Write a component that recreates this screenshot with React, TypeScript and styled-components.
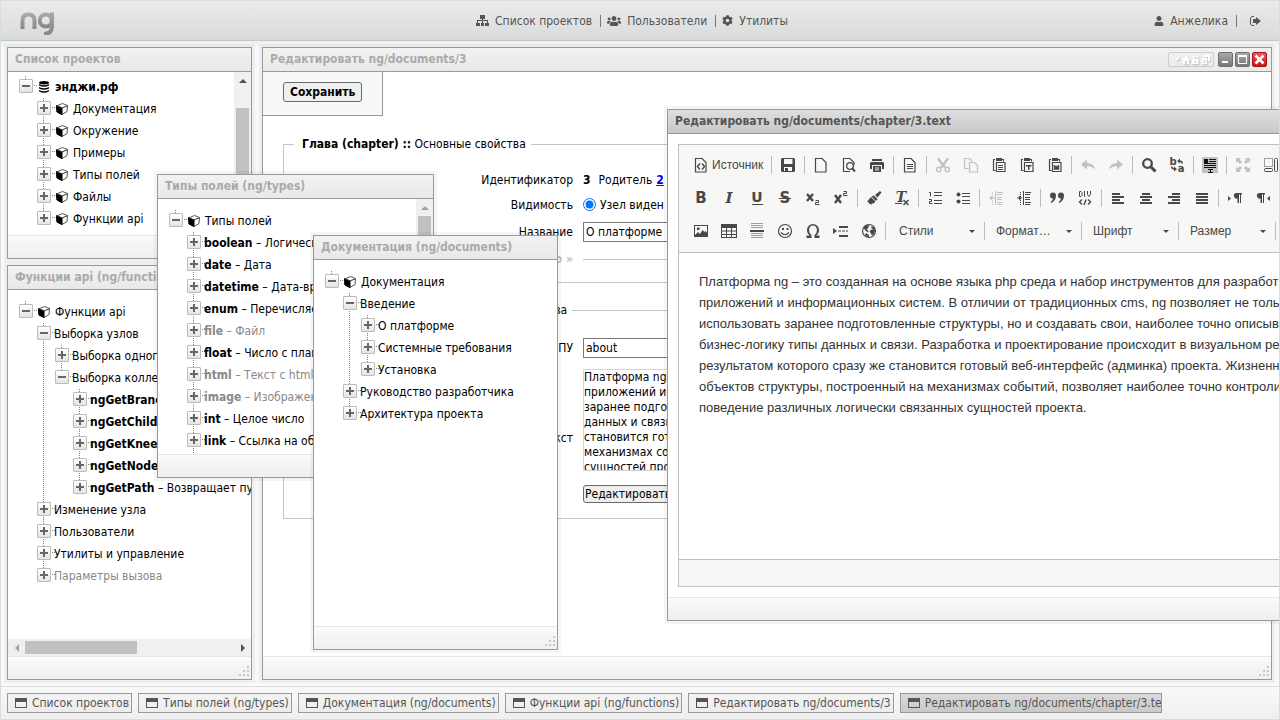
import React from "react";
import styled, { createGlobalStyle, css } from "styled-components";
import { FaCog, FaUser, FaUsers } from "react-icons/fa";

const uiFont = `"DejaVu Sans Condensed", "Noto Sans", sans-serif`;
const editorFont = `"Liberation Sans", Arial, sans-serif`;

const GlobalStyle = createGlobalStyle`
  *, *::before, *::after { box-sizing: border-box; }
  body { margin: 0; background: #f8f9f9; font: 12px/22px ${uiFont}; color: #000; }
  button, input, select { font: inherit; color: inherit; }
  ul { list-style: none; margin: 0; padding: 0; }
`;

/* ---------- Page frame ---------- */

const Screen = styled.div`
  height: 100vh;
  display: flex;
  flex-direction: column;
  overflow: hidden;
  border: 1px solid #d9dbe3;
`;

const Header = styled.header`
  height: 40px;
  flex: none;
  display: grid;
  grid-template-columns: 1fr auto 1fr;
  align-items: center;
  padding: 0 18px;
  background: linear-gradient(#ebebeb, #d9dadb);
  border-bottom: 1px solid #c4c5c6;
  color: #555;
`;

const Nav = styled.nav<{ $end?: boolean }>`
  display: flex;
  align-items: center;
  justify-self: ${(p) => (p.$end ? "end" : "auto")};
  padding-right: ${(p) => (p.$end ? 0 : 16)}px;
`;

const NavLink = styled.a`
  display: flex;
  align-items: center;
  gap: 6px;
  color: inherit;
  text-decoration: none;
  svg { flex: none; }
`;

const Divider = styled.span<{ $before: number; $after: number }>`
  width: 1px;
  height: 12px;
  margin: 0 ${(p) => p.$after}px 0 ${(p) => p.$before}px;
  background: #777;
`;

const Desktop = styled.main`
  position: relative;
  flex: 1;
  min-height: 0;
  overflow: hidden;
  background: linear-gradient(#eeefef, #f8f9f9 8px);
`;

const Taskbar = styled.footer`
  height: 33px;
  flex: none;
  display: flex;
  gap: 6px;
  padding: 6px;
  background: linear-gradient(#f9f9f9, #efefef);
  border-top: 1px solid #d9dcdf;
`;

const Task = styled.button<{ $active?: boolean }>`
  height: 20px;
  max-width: 262px;
  display: flex;
  align-items: center;
  gap: 5px;
  padding: 0 2px 0 7px;
  overflow: hidden;
  white-space: nowrap;
  border: 1px solid #999;
  background: ${(p) => (p.$active ? "linear-gradient(#dadada, #c9c9c9)" : "linear-gradient(#f4f4f4, #ececec)")};
  color: #555;
  line-height: 18px;
  svg { flex: none; }
`;

/* ---------- Windows ---------- */

type Place = { left?: number; right?: number; top?: number; bottom?: number; width?: number; height?: number };
const px = (name: string, v?: number) => (v === undefined ? "" : `${name}: ${v}px;`);

const WindowBox = styled.section<{ $place: Place }>`
  position: absolute;
  ${({ $place: p }) => css`
    ${px("left", p.left)} ${px("right", p.right)} ${px("top", p.top)}
    ${px("bottom", p.bottom)} ${px("width", p.width)} ${px("height", p.height)}
  `}
  display: flex;
  flex-direction: column;
  border: 1px solid #999;
  background: #fff;
  box-shadow: 0 0 0 3px rgba(0, 0, 0, 0.04);
`;

const TitleBar = styled.header<{ $active?: boolean }>`
  height: 24px;
  flex: none;
  display: flex;
  align-items: center;
  justify-content: space-between;
  padding: 0 4px 0 7px;
  border-bottom: 1px solid #999;
  background: ${(p) => (p.$active ? "linear-gradient(#dedede, #c8c8c8)" : "linear-gradient(#f2f2f2, #e9e9e9)")};
  color: ${(p) => (p.$active ? "#555" : "#aaa")};
`;

const Title = styled.h2`
  margin: 0;
  padding-bottom: 2px;
  font-size: 12px;
  line-height: 20px;
  font-weight: bold;
  white-space: nowrap;
`;

const WindowBody = styled.div`
  flex: 1;
  min-height: 0;
  display: flex;
  overflow: hidden;
`;

const WindowFooter = styled.footer`
  height: 23px;
  flex: none;
  display: flex;
  align-items: flex-end;
  justify-content: flex-end;
  padding: 2px 1px;
  border-top: 1px solid #e6e6e6;
  background: linear-gradient(#fafafa, #efefef);
`;

const Controls = styled.div`
  display: flex;
  gap: 2px;
`;

const ControlGroup = styled.div`
  display: flex;
  align-items: center;
  justify-content: space-evenly;
  width: 46px;
  height: 15px;
  margin-right: 2px;
  border: 1px solid #ccc;
  border-radius: 2px;
`;

const ControlButton = styled.button<{ $danger?: boolean }>`
  width: 15px;
  height: 15px;
  padding: 0;
  display: grid;
  place-items: center;
  border: 1px solid ${(p) => (p.$danger ? "#b01515" : "#6f6f6f")};
  border-radius: 2px;
  background: ${(p) => (p.$danger ? "linear-gradient(#ee5555, #cc1414)" : "linear-gradient(#a9a9a9, #777)")};
`;

const Grip = () => (
  <svg width="12" height="12" fill="#c8c8c8" aria-hidden="true">
    <path d="M9 1h2v2h-2zM5 5h2v2h-2zM9 5h2v2h-2zM1 9h2v2h-2zM5 9h2v2h-2zM9 9h2v2h-2z" />
  </svg>
);

const groupShapes = (
  <>
    <path d="M3 5h6L6 8z" />
    <path fillRule="evenodd" d="M11 7l4-4.500L19 7h-1v4h-6V7zM14 8v3h2V8z" />
    <path fillRule="evenodd" d="M21 6h6.500v5H21zM23.500 8v1.500h1.500V8zM22 6V3.500q2.500-2.500 5 0V5h-1.500V4q-1-1-2 0v2z" />
    <path fillRule="evenodd" d="M33 2h6v6h-2V4h-4zM31 5h5v6h-5zM32.500 7.500V10h2V7.500z" />
  </>
);

const WindowControls = () => (
  <Controls>
    <ControlGroup>
      <svg width="40" height="13" viewBox="0 0 40 13" aria-hidden="true">
        <g fill="#c6c6c6" stroke="#d4d4d4" transform="translate(1 1)">{groupShapes}</g>
        <g fill="#fff">{groupShapes}</g>
      </svg>
    </ControlGroup>
    <ControlButton aria-label="Свернуть">
      <svg width="13" height="13"><path d="M3 8h6v2H3z" fill="#fff" /></svg>
    </ControlButton>
    <ControlButton aria-label="Развернуть">
      <svg width="13" height="13"><path d="M2 2h9v9H2zM3 4v6h7V4z" fill="#fff" fillRule="evenodd" /></svg>
    </ControlButton>
    <ControlButton $danger aria-label="Закрыть">
      <svg width="13" height="13"><path d="M2.500 2.500l8 8M10.500 2.500l-8 8" stroke="#fff" strokeWidth="2.600" /></svg>
    </ControlButton>
  </Controls>
);

type WindowProps = {
  title: string;
  place: Place;
  active?: boolean;
  controls?: boolean;
  children: React.ReactNode;
};

const Window = ({ title, place, active, controls, children }: WindowProps) => (
  <WindowBox $place={place}>
    <TitleBar $active={active}>
      <Title>{title}</Title>
      {controls && <WindowControls />}
    </TitleBar>
    <WindowBody>{children}</WindowBody>
    <WindowFooter>
      <Grip />
    </WindowFooter>
  </WindowBox>
);

/* ---------- Scroll bars ---------- */

const ScrollTrack = styled.div<{ $horizontal?: boolean }>`
  flex: none;
  display: flex;
  flex-direction: ${(p) => (p.$horizontal ? "row" : "column")};
  ${(p) => (p.$horizontal ? "height: 17px;" : "width: 17px;")}
  background: #f0f0f0;
`;

const ScrollArrow = styled.span`
  width: 17px;
  height: 17px;
  flex: none;
  display: grid;
  place-items: center;
`;

const ScrollThumb = styled.span<{ $offset?: number; $size: number; $horizontal?: boolean }>`
  flex: none;
  background: #c1c1c1;
  ${(p) =>
    p.$horizontal
      ? `height: 13px; width: ${p.$size}px; margin: 2px auto 0 ${p.$offset ?? 0}px;`
      : `width: 13px; height: ${p.$size}px; margin: ${p.$offset ?? 0}px 2px auto;`}
`;

const arrowPaths = { up: "M4 10l4-4 4 4z", left: "M10 4v8l-4-4z", right: "M6 4v8l4-4z" };
const Arrow = ({ to, dim }: { to: keyof typeof arrowPaths; dim?: boolean }) => (
  <ScrollArrow>
    <svg width="16" height="16" aria-hidden="true">
      <path d={arrowPaths[to]} fill={dim ? "#a3a3a3" : "#505050"} />
    </svg>
  </ScrollArrow>
);

/* ---------- Trees ---------- */

type TreeItem = {
  name?: string;
  label?: string;
  icon?: "cube" | "base";
  muted?: boolean;
  more?: boolean;
  children?: TreeItem[];
};

const TreePane = styled.div<{ $top?: number }>`
  flex: 1;
  min-width: 0;
  overflow: hidden;
  padding: ${(p) => p.$top ?? 10}px 0 0 11px;
`;

const dots = (dir: string) => `repeating-linear-gradient(${dir}, transparent 0 1px, #808080 1px 2px)`;

const Node = styled.li<{ $more?: boolean }>`
  background: ${dots("to bottom")} 6px 0 / 1px 100% no-repeat;
  &:last-child {
    background-size: 1px ${(p) => (p.$more ? "100%" : "11px")};
    padding-bottom: ${(p) => (p.$more ? 3 : 0)}px;
  }
  > ul { margin-left: 18px; }
`;

const NodeRow = styled.div<{ $muted?: boolean }>`
  height: 22px;
  display: flex;
  align-items: center;
  white-space: nowrap;
  color: ${(p) => (p.$muted ? "#888" : "#000")};
  background: ${dots("to right")} 14px 10px / 4px 1px no-repeat;
`;

const Toggle = styled.button`
  width: 14px;
  height: 14px;
  flex: none;
  display: grid;
  place-items: center;
  padding: 0;
  margin-right: 3px;
  border: 1px solid #bbb;
  border-radius: 1px;
  background: linear-gradient(#fff, #e4e4e4);
`;

const NodeIcon = styled.span`
  display: flex;
  margin: 2px 5px 0 2px;
`;

const NodeLabel = styled.span`
  padding-top: 2px;
`;

const Cube = () => (
  <svg width="12" height="12" viewBox="0 0 12 12" aria-hidden="true">
    <path d="M6.500 .5L11.500 2.500L11 8.500L6 11.500L1 9L.5 3z" fill="#fff" stroke="#555" />
    <path d="M.5 2.700L6 5v6.500L1 9z" fill="#000" stroke="#000" />
    <path d="M.5 2.700L6 5l5.500-2.300" fill="none" stroke="#333" />
  </svg>
);

const Base = () => (
  <svg width="12" height="12" viewBox="0 0 12 12" aria-hidden="true">
    <ellipse cx="6" cy="1.700" rx="5" ry="1.700" />
    <path d="M1 3q5 2.500 10 0v1.400q-5 2.800-10 0zM1 6q5 2.500 10 0v1.400q-5 2.800-10 0zM1 9q5 2.500 10 0v1.200q-5 3-10 0z" />
  </svg>
);

const Tree = ({ items }: { items: TreeItem[] }) => (
  <ul>
    {items.map((item, i) => (
      <Node key={i} $more={item.more}>
        <NodeRow $muted={item.muted}>
          <Toggle aria-label={item.children ? "Свернуть ветку" : "Раскрыть ветку"}>
            <svg width="12" height="12">
              <path d={item.children ? "M2 5h8v2H2z" : "M2 5h8v2H2zM5 2h2v8H5z"} fill="#666" />
            </svg>
          </Toggle>
          {item.icon && <NodeIcon>{item.icon === "cube" ? <Cube /> : <Base />}</NodeIcon>}
          <NodeLabel>
            {item.name && <b>{item.name}</b>}
            {item.name && item.label && " – "}
            {item.label}
          </NodeLabel>
        </NodeRow>
        {item.children && <Tree items={item.children} />}
      </Node>
    ))}
  </ul>
);

const cubes = (...labels: string[]): TreeItem[] => labels.map((label) => ({ label, icon: "cube" }));

const projectTree: TreeItem[] = [
  {
    name: "энджи.рф",
    icon: "base",
    children: cubes("Документация", "Окружение", "Примеры", "Типы полей", "Файлы", "Функции api"),
  },
];

const functionTree: TreeItem[] = [
  {
    label: "Функции api",
    icon: "cube",
    children: [
      {
        label: "Выборка узлов",
        children: [
          { label: "Выборка одного узла" },
          {
            label: "Выборка коллекции",
            children: [
              { name: "ngGetBranch" },
              { name: "ngGetChildren" },
              { name: "ngGetKnee" },
              { name: "ngGetNodes" },
              { name: "ngGetPath", label: "Возвращает путь" },
            ],
          },
        ],
      },
      { label: "Изменение узла" },
      { label: "Пользователи" },
      { label: "Утилиты и управление" },
      { label: "Параметры вызова", muted: true },
    ],
  },
];

const typeTree: TreeItem[] = [
  {
    label: "Типы полей",
    icon: "cube",
    children: [
      { name: "boolean", label: "Логический" },
      { name: "date", label: "Дата" },
      { name: "datetime", label: "Дата-время" },
      { name: "enum", label: "Перечисляемый" },
      { name: "file", label: "Файл", muted: true },
      { name: "float", label: "Число с плавающей точкой" },
      { name: "html", label: "Текст с html", muted: true },
      { name: "image", label: "Изображение", muted: true },
      { name: "int", label: "Целое число" },
      { name: "link", label: "Ссылка на объект", more: true },
    ],
  },
];

const documentTree: TreeItem[] = [
  {
    label: "Документация",
    icon: "cube",
    children: [
      {
        label: "Введение",
        children: [{ label: "О платформе" }, { label: "Системные требования" }, { label: "Установка" }],
      },
      { label: "Руководство разработчика" },
      { label: "Архитектура проекта" },
    ],
  },
];

/* ---------- Form of the main window ---------- */

const FormPage = styled.form`
  flex: 1;
  min-width: 0;
  display: flex;
  flex-direction: column;
  align-items: stretch;
`;

const SavePanel = styled.div`
  align-self: flex-start;
  padding: 10px 20px 13px;
  border: solid #999;
  border-width: 0 1px 1px 0;
  background: #f7f8f8;
`;

const FormButton = styled.button<{ $primary?: boolean }>`
  display: block;
  height: ${(p) => (p.$primary ? 20 : 18)}px;
  padding: 0 ${(p) => (p.$primary ? 6 : 1)}px;
  border: 1px solid #6b6b6b;
  border-radius: 3px;
  background: #efefef;
  font-weight: ${(p) => (p.$primary ? "bold" : "normal")};
  line-height: 16px;
`;

const Group = styled.fieldset<{ $gap: number }>`
  min-width: 0;
  margin: ${(p) => p.$gap}px 20px 0;
  padding: 0 10px;
  border: 1px solid #c4c4c4;
`;

const Legend = styled.legend`
  padding: 0 5px 0 8px;
  line-height: 18px;
`;

const Fields = styled.div<{ $top: number; $bottom: number }>`
  display: grid;
  grid-template-columns: 279px 1fr;
  column-gap: 10px;
  align-items: center;
  padding: ${(p) => p.$top}px 0 ${(p) => p.$bottom}px;
`;

const FieldName = styled.label<{ $faint?: boolean }>`
  text-align: right;
  line-height: 20px;
  color: ${(p) => (p.$faint ? "#c4c4c4" : "#000")};
  font-weight: ${(p) => (p.$faint ? "bold" : "normal")};
`;

const FieldValue = styled.div<{ $height: number }>`
  height: ${(p) => p.$height}px;
  display: flex;
  align-items: center;
  gap: 4px;
  white-space: nowrap;
`;

const ParentLink = styled.a`
  color: #0000ee;
  font-weight: bold;
`;

const ParentName = styled.span`
  margin-left: 4px;
`;

const Radio = styled.input`
  width: 13px;
  height: 13px;
  margin: 0;
`;

const TextInput = styled.input`
  width: 100%;
  height: 20px;
  padding: 0 2px;
  border: 1px solid #767676;
  border-radius: 0;
  background: #fff;
`;

const Rule = styled.hr`
  width: 100%;
  margin: 0;
  border: 0;
  border-top: 1px solid #c4c4c4;
`;

const Preview = styled.div`
  width: 100%;
  height: 102px;
  overflow: hidden;
  border: 1px solid #d4d4d4;
  line-height: 15px;
  white-space: pre;
`;

const previewText = [
  "Платформа ng – это созданная на основе языка php среда",
  "приложений и информационных систем. ng позволяет использовать",
  "заранее подготовленные структуры, но и создавать свои типы",
  "данных и связи. Разработка происходит в визуальном редакторе",
  "становится готовый веб-интерфейс проекта. Жизненный цикл на",
  "механизмах событий позволяет контролировать поведение",
  "сущностей проекта.",
].join("\n");

/* ---------- Rich text editor ---------- */

const EditorArea = styled.div`
  flex: 1;
  min-width: 0;
  display: flex;
  padding: 10px;
`;

const Editor = styled.div`
  flex: 1;
  min-width: 0;
  display: flex;
  flex-direction: column;
  overflow: hidden;
  border: 1px solid #bfbfbf;
  font-family: ${editorFont};
`;

const Toolbar = styled.div`
  flex: none;
  display: flex;
  flex-direction: column;
  gap: 5px;
  padding: 6px 8px 7px;
  background: #f7f7f6;
  border-bottom: 1px solid #bfbfbf;
  color: #484848;
`;

const ToolRow = styled.div`
  height: 28px;
  display: flex;
  align-items: center;
`;

const Tool = styled.button<{ $off?: boolean }>`
  height: 28px;
  flex: none;
  display: flex;
  align-items: center;
  gap: 3px;
  padding: 0 6px;
  border: 0;
  background: none;
  opacity: ${(p) => (p.$off ? 0.3 : 1)};
`;

const Separator = styled.span`
  width: 1px;
  height: 18px;
  flex: none;
  margin: 0 2px;
  background: #bcbcbc;
`;

const Combo = styled.label`
  width: 92px;
  height: 28px;
  flex: none;
  display: flex;
  align-items: center;
  padding: 0 5px 0 9px;
  &:first-of-type { margin-left: 2px; }
  svg { flex: none; }
`;

const ComboSelect = styled.select`
  flex: 1;
  min-width: 0;
  padding: 0;
  border: 0;
  appearance: none;
  background: none;
`;

const EditorText = styled.div`
  flex: 1;
  padding: 18px 20px;
  color: #333;
  font-size: 13px;
  line-height: 21px;
  white-space: pre;
`;

const EditorPath = styled.div`
  height: 27px;
  flex: none;
  border-top: 1px solid #bfbfbf;
  background: #f7f7f6;
`;

const page = "M2.500 1.500h6.500l4 4v9.500h-10.500z";
const clip = "M4 2.500H2.500v11H4.500M11 2.500h1.500v2M5.500 5.500h8.500v9h-8.500z";
const lines = (ys: number[], x = 2, w = 12, h = 1) => ys.map((y) => `M${x} ${y}h${w}v${h}h${-w}z`).join("");

const Outline = ({ d }: { d: string }) => <path d={d} fill="none" stroke="currentColor" strokeWidth="1.200" />;
const Glyph = (p: React.SVGProps<SVGTextElement>) => (
  <text textAnchor="middle" fontWeight="bold" x="8" fill="currentColor" {...p} />
);
const sans = "DejaVu Sans";
const serif = "DejaVu Serif";

const icons: Record<string, React.ReactNode> = {
  source: (
    <>
      <Outline d={page} />
      <path d="M7 6.500L4.500 9.500 7 12.500M9 6.500l2.500 3-2.500 3" fill="none" stroke="currentColor" strokeWidth="1.400" />
    </>
  ),
  save: <path fillRule="evenodd" d="M1 2l1-1h12l1 1v12l-1 1H2l-1-1zM4 2v5h8.500V2zM4 10v4h8v-4zM5 11h3v3H5z" />,
  fresh: <Outline d={page} />,
  preview: (
    <>
      <Outline d="M9 14.500H2.500v-13h6.500l4 4v3" />
      <circle cx="9" cy="9" r="3.300" fill="none" stroke="currentColor" strokeWidth="1.300" />
      <path d="M11 11l3 3.500" stroke="currentColor" strokeWidth="2" />
    </>
  ),
  print: <path fillRule="evenodd" d="M3 2h10v2H3zM1 6l1-1h12l1 1v6h-2V8H3v4H1zM4 9h8v6H4zM6 10.500v1h4v-1zM6 12.500v1h4v-1z" />,
  templates: (
    <>
      <Outline d={page} />
      <path d={lines([7, 9, 11], 5, 6)} />
    </>
  ),
  cut: (
    <g fill="none" stroke="currentColor">
      <path d="M3 1.500l7 9M13 1.500l-7 9" strokeWidth="2.400" />
      <circle cx="3.800" cy="12.500" r="2.200" strokeWidth="1.400" />
      <circle cx="12.200" cy="12.500" r="2.200" strokeWidth="1.400" />
    </g>
  ),
  copy: <Outline d="M5.500 11.500h-4v-10h5l3 3M6.500 5.500h5l3 3v6.500h-8z" />,
  paste: (
    <>
      <Outline d={clip} />
      <path d={"M5 1h6v3H5z" + lines([8, 10, 12], 7, 5)} />
    </>
  ),
  pasteText: (
    <>
      <Outline d={clip} />
      <path d="M5 1h6v3H5zM7 8h5.500v1.500h-2V13H9V9.500H7z" />
    </>
  ),
  pasteWord: (
    <>
      <Outline d={clip} />
      <path d="M5 1h6v3H5z" />
      <path d="M7.500 8v4h1.500V9.500h1V12h1.500V8" fill="none" stroke="currentColor" strokeWidth="1.400" />
    </>
  ),
  undo: <path d="M1 7.500L7 2.500V6q7 0 8 6.500Q12 9 7 9v3.500z" />,
  redo: <path d="M15 7.500L9 2.500V6q-7 0-8 6.500Q4 9 9 9v3.500z" />,
  find: (
    <g fill="none" stroke="currentColor">
      <circle cx="6.500" cy="6.500" r="4.300" strokeWidth="2.300" />
      <path d="M10 10l4.500 4.500" strokeWidth="3" />
    </g>
  ),
  replace: (
    <>
      <Glyph x="4" y="8" fontSize="10" fontFamily={sans}>b</Glyph>
      <Glyph x="12" y="15" fontSize="10" fontFamily={sans}>a</Glyph>
      <path d="M8 4l3-2.500v2q3 0 3 3h-1.500q0-1.500-1.500-1.500v1.500zM8 12l-3 2.500v-2q-3 0-3-3h1.500q0 1.500 1.500 1.500V9.500z" />
    </>
  ),
  selectAll: (
    <>
      <path d="M0 0h16v16H0z" opacity=".3" />
      <path
        fill="#111"
        d={"M2 2h4v4H2z" + lines([2, 4], 7, 7) + lines([6, 8, 10]) + "M6 12h5v1H9v2h2v1H6v-1h2v-2H6z"}
      />
    </>
  ),
  maximize: <path d="M1 1h5L4.500 2.500 7 5 5 7 2.500 4.500 1 6zM15 1h-5l1.500 1.500L9 5l2 2 2.500-2.500L15 6zM1 15h5l-1.500-1.500L7 11 5 9l-2.500 2.500L1 10zM15 15h-5l1.500-1.500L9 11l2-2 2.500 2.500L15 10z" />,
  blocks: (
    <g fill="none" stroke="currentColor">
      <path d="M1.500 1.500h8v8h-8z" strokeDasharray="1 1" />
      <rect x="1.500" y="11.500" width="8" height="3" rx="1" />
      <rect x="11.500" y="1.500" width="3" height="13" rx="1" />
    </g>
  ),
  bold: <Glyph y="13" fontSize="15" fontFamily={sans}>B</Glyph>,
  italic: <Glyph y="13" fontSize="15" fontFamily={serif} fontStyle="italic">I</Glyph>,
  underline: (
    <>
      <Glyph y="12" fontSize="14" fontFamily={sans}>U</Glyph>
      <path d="M3 14h11v1H3z" />
    </>
  ),
  strike: (
    <>
      <Glyph y="13" fontSize="15" fontFamily={sans}>S</Glyph>
      <path d="M2 8h12v1H2z" />
    </>
  ),
  sub: (
    <>
      <path d="M2 4l6 7M8 4l-6 7" stroke="currentColor" strokeWidth="2.400" />
      <path d="M10.500 10.500h3v2h-3v2h4" fill="none" stroke="currentColor" />
    </>
  ),
  sup: (
    <>
      <path d="M2 5l6 8M8 5l-6 8" stroke="currentColor" strokeWidth="2.400" />
      <path d="M10.500 1.500h3v2h-3v2h4" fill="none" stroke="currentColor" />
    </>
  ),
  brush: <path d="M14 1l1.500 1.500-4 5L9 5zM8 5.500l3.500 3.500-1.500 2-4.500-4.500zM5 7l4.500 4.500L7 14l-1-1-.5 2L4 13.500l-1 .5-.5-2L1 11.500z" />,
  removeFormat: (
    <>
      <Glyph x="7" y="12" fontSize="14" fontFamily={serif} fontStyle="italic">T</Glyph>
      <path d="M1 13.500h7" stroke="currentColor" />
      <path d="M9.500 10l5 5M14.500 10l-5 5" stroke="currentColor" strokeWidth="1.500" />
    </>
  ),
  ordered: (
    <>
      <path d={lines([2, 5, 10, 13], 7, 8)} />
      <path d="M2 2.500h1.500v4M2 9.500h2.500v2h-2v2h3" fill="none" stroke="currentColor" />
    </>
  ),
  bullets: (
    <>
      <path d={lines([3, 6, 10, 13], 7, 8)} />
      <circle cx="3.500" cy="4.500" r="2" />
      <circle cx="3.500" cy="11.500" r="2" />
    </>
  ),
  outdent: (
    <>
      <path d={"M1 8l3-2.500v2h3v1H4v2z" + lines([2, 12], 9, 6) + lines([4, 7, 9, 14], 9, 5)} />
      <path d="M7.500 1v14" stroke="currentColor" />
      <path d="M4.500 2v13" stroke="currentColor" strokeDasharray="1 1" />
    </>
  ),
  indent: (
    <>
      <path d={"M6 8L3 5.500v2H1v1h2v2z" + lines([2, 12], 9, 6) + lines([4, 7, 9, 14], 9, 5)} />
      <path d="M7.500 1v14" stroke="currentColor" />
      <path d="M4.500 2v13" stroke="currentColor" strokeDasharray="1 1" />
    </>
  ),
  quote: <path d="M1 5.500a3 3 0 1 1 6 0q0 4.500-4.500 7.500l-.8-1q2-1.500 2.300-3.500a3 3 0 0 1-3-3zM9 5.500a3 3 0 1 1 6 0q0 4.500-4.500 7.500l-.8-1q2-1.500 2.300-3.500a3 3 0 0 1-3-3z" />,
  div: (
    <g fill="none" stroke="currentColor">
      <path d="M2.500 1.500h1.500l1 1v3l-1 1H2.500zM7.500 1v6M10.500 1v3.500l1.500 2 1.500-2V1" />
      <path d="M5 9.500L2.500 12 5 14.500M11 9.500l2.500 2.500-2.500 2.500M9 9.500l-2 5.500" strokeWidth="1.400" />
    </g>
  ),
  left: <path d={lines([3, 9], 2, 8, 2) + lines([6, 12], 2, 12, 2)} />,
  center: <path d={lines([3, 9], 4, 8, 2) + lines([6, 12], 2, 12, 2)} />,
  right: <path d={lines([3, 9], 6, 8, 2) + lines([6, 12], 2, 12, 2)} />,
  justify: <path d={lines([3, 6, 9, 12], 2, 12, 2)} />,
  ltr: <path d="M1 6l3 2.500L1 11zM9 3h6v1.500h-1V13h-1V4.500h-1V13h-1.500V8.500a2.700 2.700 0 0 1-1.500-5.500z" />,
  rtl: <path d="M15 6l-3 2.500L15 11zM4 3h6v1.500H9V13H8V4.500H7V13H5.500V8.500A2.700 2.700 0 0 1 4 3z" />,
  image: <path fillRule="evenodd" d="M1 2h14v12H1zM2 3v9l3-3 2 2 2.500-4 2 2 1-1L14 10V3zM4 4.500h2.500V7H4z" />,
  table: <path fillRule="evenodd" d="M0 1h16v14H0zM1 5v2.500h4V5zM6 5v2.500h4V5zM11 5v2.500h4V5zM1 8.500V11h4V8.500zM6 8.500V11h4V8.500zM11 8.500V11h4V8.500zM1 12v2h4v-2zM6 12v2h4v-2zM11 12v2h4v-2z" />,
  rule: (
    <>
      <path d={lines([0, 2, 4, 10, 12, 14])} opacity=".5" />
      <path d="M1 7h14v2H1z" />
    </>
  ),
  smiley: (
    <>
      <circle cx="8" cy="8" r="6.500" fill="none" stroke="currentColor" strokeWidth="1.200" />
      <path d="M5 5h2v2H5zM9.500 5h2v2h-2z" />
      <path d="M4 9.500q4 4.500 8 0" fill="none" stroke="currentColor" strokeWidth="1.200" />
    </>
  ),
  omega: <path d="M1.500 15v-2.500H5Q2 10.500 2 7a6 6 0 0 1 12 0q0 3.500-3 5.500h3.500V15H9.500v-3q2.500-1.500 2.500-5a4 4.500 0 0 0-8 0q0 3.500 2.500 5v3z" />,
  pageBreak: <path d={"M0 5l4 3-4 3z" + lines([3, 12], 6, 9, 2) + "M5 7.500h3v1H5zM9 7.500h3v1H9zM13 7.500h2v1h-2z"} />,
  globe: (
    <>
      <circle cx="8" cy="8" r="6.500" fill="none" stroke="currentColor" strokeWidth="1.200" />
      <path d="M2.500 5q1.500-3 5-3l1 1-1.500 1 .5 1.500-2 .5 2 2-.5 1.500-2-1.500zM8.500 8l2-1.500 1 .5V5.500L10 5l.5-1.500L12.500 4q1.500 2 1.500 4l-1.500 3.500-1.500 1L9.500 10zM5 10l3 2v2q-2.500 0-4-2z" />
    </>
  ),
};

type ToolItem = [icon: string, title: string, off?: boolean];

const toolRows: ToolItem[][][] = [
  [
    [["source", "Источник"]],
    [["save", "Сохранить"]],
    [["fresh", "Новая страница"], ["preview", "Предварительный просмотр"], ["print", "Печать"]],
    [["templates", "Шаблоны"]],
    [
      ["cut", "Вырезать", true],
      ["copy", "Копировать", true],
      ["paste", "Вставить"],
      ["pasteText", "Вставить только текст"],
      ["pasteWord", "Вставить из Word"],
    ],
    [["undo", "Отменить", true], ["redo", "Повторить", true]],
    [["find", "Найти"], ["replace", "Заменить"]],
    [["selectAll", "Выделить все"]],
    [["maximize", "Развернуть", true], ["blocks", "Отображать блоки"]],
  ],
  [
    [
      ["bold", "Полужирный"],
      ["italic", "Курсив"],
      ["underline", "Подчеркнутый"],
      ["strike", "Зачеркнутый"],
      ["sub", "Подстрочный индекс"],
      ["sup", "Надстрочный индекс"],
    ],
    [["brush", "Копировать форматирование"], ["removeFormat", "Убрать форматирование"]],
    [["ordered", "Нумерованный список"], ["bullets", "Маркированный список"]],
    [["outdent", "Уменьшить отступ", true], ["indent", "Увеличить отступ"]],
    [["quote", "Цитата"], ["div", "Контейнер"]],
    [
      ["left", "По левому краю"],
      ["center", "По центру"],
      ["right", "По правому краю"],
      ["justify", "По ширине"],
    ],
    [["ltr", "Слева направо"], ["rtl", "Справа налево"]],
  ],
  [
    [
      ["image", "Изображение"],
      ["table", "Таблица"],
      ["rule", "Горизонтальная линия"],
      ["smiley", "Смайлы"],
      ["omega", "Специальный символ"],
      ["pageBreak", "Разрыв страницы"],
      ["globe", "iFrame"],
    ],
  ],
];

const combos = ["Стили", "Формат…", "Шрифт", "Размер"];

const editorText = [
  "Платформа ng – это созданная на основе языка php среда и набор инструментов для разработки",
  "приложений и информационных систем. В отличии от традиционных cms, ng позволяет не только",
  "использовать заранее подготовленные структуры, но и создавать свои, наиболее точно описывающие",
  "бизнес-логику типы данных и связи. Разработка и проектирование происходит в визуальном редакторе,",
  "результатом которого сразу же становится готовый веб-интерфейс (админка) проекта. Жизненный цикл",
  "объектов структуры, построенный на механизмах событий, позволяет наиболее точно контролировать",
  "поведение различных логически связанных сущностей проекта.",
].join("\n");

const RichTextEditor = () => (
  <EditorArea>
    <Editor>
      <Toolbar>
        {toolRows.map((groups, r) => (
          <ToolRow key={r}>
            {groups.map((group, g) => (
              <React.Fragment key={g}>
                {g > 0 && <Separator />}
                {group.map(([icon, title, off]) => (
                  <Tool key={icon} type="button" aria-label={title} disabled={off} $off={off}>
                    <svg width="16" height="16" viewBox="0 0 16 16" fill="currentColor" aria-hidden="true">
                      {icons[icon]}
                    </svg>
                    {icon === "source" && title}
                  </Tool>
                ))}
              </React.Fragment>
            ))}
            {r === 2 && (
              <>
                <Separator />
                {combos.map((name) => (
                  <React.Fragment key={name}>
                    <Combo>
                      <ComboSelect aria-label={name}>
                        <option>{name}</option>
                      </ComboSelect>
                      <svg width="9" height="5" fill="currentColor" aria-hidden="true">
                        <path d="M1 1h6L4 4z" />
                      </svg>
                    </Combo>
                    <Separator />
                  </React.Fragment>
                ))}
              </>
            )}
          </ToolRow>
        ))}
      </Toolbar>
      <EditorText>{editorText}</EditorText>
      <EditorPath />
    </Editor>
  </EditorArea>
);

/* ---------- Header and task bar parts ---------- */

const Logo = () => (
  <svg width="36" height="28" viewBox="0 0 36 28" role="img" aria-label="ng">
    <defs>
      <linearGradient id="ink" x1="0" y1="0" x2="0" y2="1">
        <stop offset="0" stopColor="#a8a8a8" />
        <stop offset="1" stopColor="#888" />
      </linearGradient>
    </defs>
    <g fill="none" stroke="url(#ink)" strokeWidth="4">
      <path d="M3.500 22V13.500Q3.500 7.500 9.500 7.500t6 6V22" />
      <circle cx="26.800" cy="13.500" r="6" />
      <path d="M33 5.500v14q0 7-8 7.500" />
    </g>
  </svg>
);

const Sitemap = () => (
  <svg width="13" height="11" fill="currentColor" aria-hidden="true">
    <path d="M4 0h5v4H7v1h5v3h1v3H9V8h2V6H7v2h1v3H5V8h1V6H2v2h2v3H0V8h1V5h5V4H4z" />
  </svg>
);

const SignOut = () => (
  <svg width="11" height="10" fill="currentColor" aria-hidden="true">
    <path d="M4 0v1H2L1 2v6l1 1h2v1H2L0 8V2l2-2zM6 1l5 4-5 4V7H3V3h3z" />
  </svg>
);

const WindowGlyph = () => (
  <svg width="12" height="10" aria-hidden="true">
    <path d="M0 0h12v10H0zM1 4v5h10V4z" fill="#555" fillRule="evenodd" />
  </svg>
);

const tasks = [
  "Список проектов",
  "Типы полей (ng/types)",
  "Документация (ng/documents)",
  "Функции api (ng/functions)",
  "Редактировать ng/documents/3",
  "Редактировать ng/documents/chapter/3.text",
];

const Column = styled.div`
  flex: 1;
  min-width: 0;
  display: flex;
  flex-direction: column;
`;

export default function App() {
  return (
    <Screen>
      <GlobalStyle />
      <Header>
        <Logo />
        <Nav>
          <NavLink href="#projects"><Sitemap />Список проектов</NavLink>
          <Divider $before={8} $after={6} />
          <NavLink href="#users"><FaUsers size={14} />Пользователи</NavLink>
          <Divider $before={8} $after={6} />
          <NavLink href="#tools"><FaCog size={11} />Утилиты</NavLink>
        </Nav>
        <Nav $end>
          <NavLink href="#user"><FaUser size={10} />Анжелика</NavLink>
          <Divider $before={8} $after={13} />
          <NavLink href="#exit" aria-label="Выход"><SignOut /></NavLink>
        </Nav>
      </Header>

      <Desktop>
        <Window title="Список проектов" place={{ left: 6, top: 6, width: 245, height: 212 }}>
          <TreePane $top={3}>
            <Tree items={projectTree} />
          </TreePane>
          <ScrollTrack>
            <Arrow to="up" />
            <ScrollThumb $offset={19} $size={108} />
          </ScrollTrack>
        </Window>

        <Window title="Функции api (ng/functions)" place={{ left: 6, top: 224, bottom: 6, width: 245 }}>
          <Column>
            <TreePane>
              <Tree items={functionTree} />
            </TreePane>
            <ScrollTrack $horizontal>
              <Arrow to="left" dim />
              <ScrollThumb $horizontal $size={112} />
              <Arrow to="right" />
            </ScrollTrack>
          </Column>
        </Window>

        <Window title="Редактировать ng/documents/3" controls place={{ left: 261, top: 6, right: 7, bottom: 6 }}>
          <FormPage>
            <SavePanel>
              <FormButton $primary type="button">Сохранить</FormButton>
            </SavePanel>
            <Group $gap={19}>
              <Legend><b>Глава (chapter) ::</b> Основные свойства</Legend>
              <Fields $top={14} $bottom={11}>
                <FieldName as="span">Идентификатор</FieldName>
                <FieldValue $height={25}>
                  <b>3</b>
                  <ParentName>Родитель</ParentName>
                  <ParentLink href="#2">2</ParentLink>
                </FieldValue>
                <FieldName as="span">Видимость</FieldName>
                <FieldValue $height={25}>
                  <Radio type="radio" id="visible" name="visible" defaultChecked />
                  <label htmlFor="visible">Узел виден</label>
                </FieldValue>
                <FieldName htmlFor="name">Название</FieldName>
                <FieldValue $height={30}>
                  <TextInput id="name" defaultValue="О платформе" />
                </FieldValue>
                <FieldName as="span" $faint>Дополнительно »</FieldName>
                <FieldValue $height={24}>
                  <Rule />
                </FieldValue>
              </Fields>
            </Group>
            <Group $gap={18}>
              <Legend><b>Глава (chapter) ::</b> Дополнительные свойства</Legend>
              <Fields $top={13} $bottom={6}>
                <FieldName htmlFor="slug">ЧПУ</FieldName>
                <FieldValue $height={32}>
                  <TextInput id="slug" defaultValue="about" />
                </FieldValue>
                <FieldName as="span">Текст</FieldName>
                <div>
                  <FieldValue $height={111}>
                    <Preview>{previewText}</Preview>
                  </FieldValue>
                  <FieldValue $height={37}>
                    <FormButton type="button">Редактировать</FormButton>
                  </FieldValue>
                </div>
              </Fields>
            </Group>
          </FormPage>
        </Window>

        <Window title="Типы полей (ng/types)" place={{ left: 156, top: 133, width: 277, height: 304 }}>
          <TreePane>
            <Tree items={typeTree} />
          </TreePane>
          <ScrollTrack>
            <Arrow to="up" dim />
            <ScrollThumb $size={150} />
          </ScrollTrack>
        </Window>

        <Window title="Документация (ng/documents)" place={{ left: 312, top: 194, width: 245, height: 415 }}>
          <TreePane>
            <Tree items={documentTree} />
          </TreePane>
        </Window>

        <Window title="Редактировать ng/documents/chapter/3.text" active place={{ left: 666, top: 68, right: -188, height: 512 }}>
          <RichTextEditor />
        </Window>
      </Desktop>

      <Taskbar>
        {tasks.map((name, i) => (
          <Task key={name} type="button" $active={i === tasks.length - 1}>
            <WindowGlyph />
            {name}
          </Task>
        ))}
      </Taskbar>
    </Screen>
  );
}
